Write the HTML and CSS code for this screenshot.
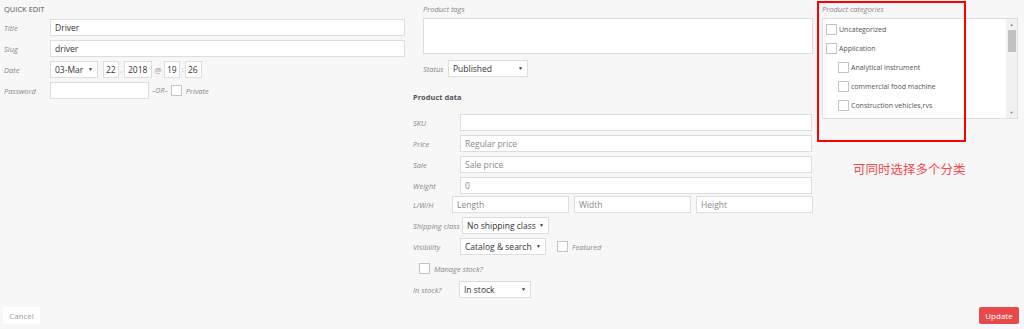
FILE: index.html
```html
<!DOCTYPE html>
<html lang="en">
<head>
    <meta charset="UTF-8">
    <title>Quick Edit</title>
    <link rel="stylesheet" href="styles.css">
</head>
<body>
    <div class="quick-edit">
        <div class="columns">
            <!-- left column: post fields -->
            <div class="col col-left">
                <h4 class="section-title">QUICK EDIT</h4>
                <div class="row">
                    <span class="label">Title</span>
                    <input class="text wide" type="text" value="Driver">
                </div>
                <div class="row">
                    <span class="label">Slug</span>
                    <input class="text wide" type="text" value="driver">
                </div>
                <div class="row">
                    <span class="label">Date</span>
                    <span class="select month"><select><option>03-Mar</option></select></span>
                    <input class="text day" type="text" value="22">
                    <span class="sep">,</span>
                    <input class="text year" type="text" value="2018">
                    <span class="sep at">@</span>
                    <input class="text hour" type="text" value="19">
                    <span class="sep">:</span>
                    <input class="text minute" type="text" value="26">
                </div>
                <div class="row">
                    <span class="label">Password</span>
                    <input class="text password" type="text">
                    <em class="or">–OR–</em>
                    <input class="check" type="checkbox">
                    <span class="check-label">Private</span>
                </div>
            </div>

            <!-- middle column: tags + product data -->
            <div class="col col-middle">
                <div class="indent">
                    <span class="label top-label">Product tags</span>
                    <textarea class="tags"></textarea>
                    <div class="row status-row">
                        <span class="label status-label">Status</span>
                        <span class="select status"><select><option>Published</option></select></span>
                    </div>
                </div>

                <h4 class="data-title">Product data</h4>
                <div class="data-rows">
                    <div class="row">
                        <span class="label data-label">SKU</span>
                        <input class="text wide" type="text">
                    </div>
                    <div class="row">
                        <span class="label data-label">Price</span>
                        <input class="text wide" type="text" placeholder="Regular price">
                    </div>
                    <div class="row">
                        <span class="label data-label">Sale</span>
                        <input class="text wide" type="text" placeholder="Sale price">
                    </div>
                    <div class="row">
                        <span class="label data-label">Weight</span>
                        <input class="text wide" type="text" placeholder="0">
                    </div>
                    <div class="row dim-row">
                        <span class="label dim-label">L/W/H</span>
                        <div class="dims">
                            <input class="text" type="text" placeholder="Length">
                            <input class="text" type="text" placeholder="Width">
                            <input class="text" type="text" placeholder="Height">
                        </div>
                    </div>
                    <div class="row">
                        <span class="label ship-label">Shipping class</span>
                        <span class="select shipping"><select><option>No shipping class</option></select></span>
                    </div>
                    <div class="row">
                        <span class="label data-label">Visibility</span>
                        <span class="select visibility"><select><option>Catalog &amp; search</option></select></span>
                        <input class="check featured" type="checkbox">
                        <span class="check-label">Featured</span>
                    </div>
                    <div class="row manage-row">
                        <input class="check" type="checkbox">
                        <span class="check-label">Manage stock?</span>
                    </div>
                    <div class="row">
                        <span class="label stock-label">In stock?</span>
                        <span class="select stock"><select><option>In stock</option></select></span>
                    </div>
                </div>
            </div>

            <!-- right column: categories -->
            <div class="col col-right">
                <span class="label top-label">Product categories</span>
                <div class="cat-box">
                    <ul class="cat-list">
                        <li><input class="check" type="checkbox"> Uncategorized</li>
                        <li><input class="check" type="checkbox"> Application</li>
                        <li class="child"><input class="check" type="checkbox"> Analytical instrument</li>
                        <li class="child"><input class="check" type="checkbox"> commercial food machine</li>
                        <li class="child"><input class="check" type="checkbox"> Construction vehicles,rvs</li>
                        <li class="child"><input class="check" type="checkbox"></li>
                    </ul>
                    <div class="scrollbar">
                        <span class="arrow">▲</span>
                        <span class="track"><span class="thumb"></span></span>
                        <span class="arrow">▼</span>
                    </div>
                </div>
                <p class="note">可同时选择多个分类</p>
                <div class="highlight"></div>
            </div>
        </div>

        <div class="actions">
            <button class="btn-cancel" type="button">Cancel</button>
            <button class="btn-update" type="button">Update</button>
        </div>
    </div>
</body>
</html>
```

FILE: styles.css
```css
body {
    margin: 0;
    background-color: #f7f7f7;
    font-family: "Open Sans", "Noto Sans", Arial, sans-serif;
    color: #333;
}
.quick-edit {
    width: 1024px;
    height: 329px;
    box-sizing: border-box;
    padding: 2px 6px 0 4px;
    overflow: hidden;
}
.columns {
    display: flex;
    gap: 8px;
    height: 305px;
}
.col {
    display: flex;
    flex-direction: column;
}
.col-left {
    width: 401px;
    gap: 4px;
}
.col-middle {
    width: 400px;
}
.col-right {
    width: 196px;
    margin-left: 1px;
    position: relative;
}
.section-title {
    margin: 0 0 -1px 0;
    font-size: 7.5px;
    line-height: 14px;
    font-weight: normal;
    color: #555;
}
.row {
    display: flex;
    align-items: center;
    height: 17px;
}
.label {
    font-size: 7.5px;
    font-style: italic;
    color: #888;
    flex-shrink: 0;
}
.col-left .label {
    width: 46px;
}
.text {
    height: 17px;
    box-sizing: border-box;
    border: 1px solid #ddd;
    background: #fff;
    padding: 0 4px;
    font-family: inherit;
    font-size: 8.5px;
    color: #333;
    outline: none;
    min-width: 0;
}
.text::placeholder {
    color: #8a8a8a;
}
.wide {
    flex: 1;
}
.day,
.hour {
    width: 16px;
    padding: 0 2px;
}
.minute {
    width: 17px;
    padding: 0 2px;
}
.year {
    width: 28px;
    padding: 0 3px;
}
.sep {
    width: 5px;
    text-align: center;
    font-size: 7px;
    color: #999;
}
.sep.at {
    width: 12px;
    font-size: 8px;
}
.month {
    width: 48px;
    margin-right: 5px;
}
.password {
    width: 99px;
}
.or {
    font-size: 7px;
    color: #888;
    margin: 0 3px 0 3px;
}
.check {
    appearance: none;
    width: 11px;
    height: 11px;
    margin: 0;
    border: 1px solid #c4c4c4;
    background: #fff;
    box-sizing: border-box;
    flex-shrink: 0;
}
.check-label {
    font-size: 7.5px;
    font-style: italic;
    color: #888;
    margin-left: 4px;
}

/* fake select with a small caret */
.select {
    position: relative;
    display: block;
    height: 17px;
    font-size: 8.5px;
    flex-shrink: 0;
}
.select select {
    appearance: none;
    display: block;
    width: 100%;
    height: 17px;
    box-sizing: border-box;
    border: 1px solid #ddd;
    background: #fff;
    padding: 0 4px;
    font-family: inherit;
    font-size: 8.5px;
    color: #333;
    border-radius: 0;
}
.select::after {
    content: "▼";
    position: absolute;
    right: 5px;
    top: 0;
    line-height: 17px;
    font-size: 5px;
    color: #333;
}

/* middle column */
.indent {
    margin-left: 10px;
    display: flex;
    flex-direction: column;
}
.top-label {
    line-height: 14px;
    display: block;
}
.tags {
    height: 36px;
    margin: 2px 0 0 0;
    box-sizing: border-box;
    border: 1px solid #ddd;
    background: #fff;
    resize: none;
}
.status-row {
    margin-top: 6px;
}
.status-label {
    width: 25px;
}
.status {
    width: 80px;
}
.data-title {
    margin: 13px 0 0 0;
    font-size: 7.5px;
    line-height: 14px;
    font-weight: bold;
    color: #555;
}
.data-rows {
    margin-top: 10px;
    display: flex;
    flex-direction: column;
    gap: 4px;
}
.data-rows .wide {
    margin-right: 1px;
}
.data-label {
    width: 47px;
}
.dim-label {
    width: 39px;
}
.dim-row {
    margin-top: -2px;
}
.ship-label {
    width: 49px;
}
.stock-label {
    width: 46px;
}
.dims {
    flex: 1;
    min-width: 0;
    display: flex;
    gap: 5px;
}
.dims .text {
    flex: 1;
    width: 0;
}
.shipping {
    width: 87px;
}
.visibility {
    width: 86px;
}
.featured {
    margin-left: 11px;
}
.stock {
    width: 72px;
}
.manage-row {
    margin-left: 6px;
    margin-top: 1px;
}

/* categories */
.cat-box {
    display: flex;
    height: 101px;
    margin-top: 2px;
    box-sizing: border-box;
    border: 1px solid #ddd;
    background: #fff;
    overflow: hidden;
}
.cat-list {
    list-style: none;
    margin: 0;
    padding: 1px 0 0 3px;
    flex: 1;
}
.cat-list li {
    display: flex;
    align-items: center;
    gap: 2px;
    height: 19px;
    font-size: 7px;
    color: #555;
}
.cat-list li.child {
    padding-left: 12px;
}
.scrollbar {
    width: 11px;
    background: #f1f1f1;
    display: flex;
    flex-direction: column;
    align-items: center;
}
.arrow {
    font-size: 4px;
    color: #777;
    height: 11px;
    line-height: 11px;
}
.track {
    flex: 1;
    width: 100%;
    display: flex;
    justify-content: center;
}
.thumb {
    width: 8px;
    height: 22px;
    background: #c1c1c1;
}
.note {
    margin: 42px 0 0 31px;
    font-family: "Noto Sans CJK SC", sans-serif;
    font-size: 12.5px;
    line-height: 16px;
    color: #f24a4a;
}
.highlight {
    position: absolute;
    left: -5px;
    top: -1px;
    width: 145px;
    height: 137px;
    border: 2px solid #ff0000;
}

/* footer buttons */
.actions {
    display: flex;
    justify-content: space-between;
    margin: 0 -1px 0 -1px;
}
.btn-cancel,
.btn-update {
    height: 17px;
    border: none;
    border-radius: 2px;
    font-family: inherit;
    font-size: 8px;
    padding: 0;
}
.btn-cancel {
    width: 37px;
    background: #fff;
    color: #a0a0a0;
}
.btn-update {
    width: 40px;
    background: #e84a4b;
    color: #fff;
}
```
